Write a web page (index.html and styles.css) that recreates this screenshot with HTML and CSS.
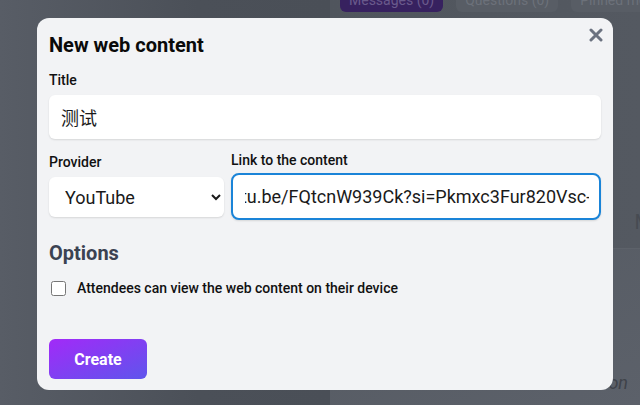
FILE: index.html
```html
<!DOCTYPE html>
<html>
<head>
<meta charset="UTF-8">
<title>New web content</title>
<link rel="stylesheet" href="styles.css">
</head>
<body>

   <div class="page">
      <div class="side"></div>
      <div class="panel">
         <div class="tabs">
            <span class="tab active">Messages (0)</span>
            <span class="tab">Questions (0)</span>
            <span class="tab">Pinned messages</span>
         </div>
         <div class="panel-body">
            <span class="ghost">M</span>
         </div>
         <div class="panel-foot">
            <span class="hint">Join the conversation</span>
         </div>
      </div>
   </div>

   <div class="overlay">
      <div class="modal">
         <button class="close" title="Close">
            <svg width="14" height="14" viewBox="0 0 14 14">
               <path d="M2 2 L12 12 M12 2 L2 12" stroke="#6b7280" stroke-width="3" stroke-linecap="round"/>
            </svg>
         </button>

         <h2 class="heading">New web content</h2>

         <label class="label" for="title">Title</label>
         <input class="field title-field" id="title" type="text" value="测试">

         <div class="row">
            <div class="col provider">
               <label class="label" for="provider">Provider</label>
               <select class="field select" id="provider">
                  <option>YouTube</option>
                  <option>Vimeo</option>
                  <option>Other</option>
               </select>
            </div>
            <div class="col link">
               <label class="label" for="link">Link to the content</label>
               <input class="field link-field" id="link" type="text" value="https://youtu.be/FQtcnW939Ck?si=Pkmxc3Fur820Vsc-">
            </div>
         </div>

         <h3 class="options">Options</h3>
         <label class="check">
            <input type="checkbox">
            <span>Attendees can view the web content on their device</span>
         </label>

         <button class="create">Create</button>
      </div>
   </div>

</body>
</html>
```

FILE: styles.css
```css
html, body {
   margin: 0;
   height: 100%;
}

body {
   font-family: Roboto, "Noto Sans CJK SC", sans-serif;
   overflow: hidden;
   background: #4d525a;
}

/* page behind the dialog */
.page {
   display: flex;
   height: 405px;
}

.side {
   width: 330px;
   flex-shrink: 0;
   background: linear-gradient(to right, #585d66, #4b5058 60%, #4a4f57);
}

.panel {
   flex: 1;
   min-width: 0;
   overflow: hidden;
   display: flex;
   flex-direction: column;
   background: linear-gradient(to right, #50555d, #545961);
}

.tabs {
   display: flex;
   gap: 13px;
   padding-left: 10px;
   margin-top: -12px;
   white-space: nowrap;
}

.tab {
   padding: 4px 9px;
   border-radius: 6px;
   font-size: 14px;
   color: #6c717a;
   background: #585d65;
}

.tab.active {
   background: #37215f;
   color: #6a5a8c;
}

.panel-body {
   height: 236px;
   display: flex;
   align-items: flex-end;
   justify-content: flex-end;
}

.ghost {
   font-size: 20px;
   color: #474b52;
   margin-right: -12px;
   margin-bottom: 14px;
}

.panel-foot {
   flex: 1;
   border-top: 1px solid #5d626a;
   background: linear-gradient(to bottom right, #555a62, #5c616a);
   display: flex;
   align-items: flex-end;
   justify-content: flex-end;
   padding-bottom: 12px;
}

.hint {
   font-style: italic;
   font-size: 18px;
   color: #3f434a;
   margin-right: 12px;
   white-space: nowrap;
}

/* dialog */
.overlay {
   position: absolute;
   top: 0;
   left: 0;
   right: 0;
   bottom: 0;
}

.modal {
   position: absolute;
   left: 37px;
   top: 18px;
   width: 576px;
   height: 372px;
   box-sizing: border-box;
   padding: 15px 12px 11px 12px;
   background: #f2f3f5;
   border-radius: 12px;
   display: flex;
   flex-direction: column;
   align-items: flex-start;
}

.close {
   position: absolute;
   right: 10px;
   top: 10px;
   border: none;
   background: none;
   padding: 0;
   cursor: pointer;
}

.heading {
   margin: 0;
   font-size: 20px;
   line-height: 24px;
   font-weight: 700;
   color: #0a0a0a;
}

.label {
   display: block;
   font-size: 14px;
   line-height: 20px;
   font-weight: 500;
   color: #111;
}

.heading + .label {
   margin-top: 13px;
}

.field {
   box-sizing: border-box;
   border: none;
   background: #fff;
   border-radius: 6px;
   box-shadow: 0 1px 2px rgba(0, 0, 0, 0.12);
   font-family: Roboto, "Noto Sans CJK SC", sans-serif;
   font-size: 18px;
   color: #1a1a1a;
   outline: none;
}

.title-field {
   width: 100%;
   height: 44px;
   margin-top: 5px;
   padding: 0 12px;
}

.row {
   display: flex;
   gap: 7px;
   width: 100%;
   margin-top: 11px;
}

.provider {
   width: 175px;
   padding-top: 2px;
}

.select {
   width: 100%;
   height: 40px;
   margin-top: 5px;
   padding: 0 12px;
}

.link {
   flex: 1;
}

.link-field {
   width: 100%;
   height: 47px;
   margin-top: 3px;
   padding: 0 10px 0 12px;
   border: 2px solid #1a84d8;
   border-radius: 8px;
   text-indent: -91px;
}

.options {
   margin: 21px 0 0 0;
   font-size: 20px;
   line-height: 24px;
   font-weight: 700;
   color: #3b4252;
}

.check {
   display: flex;
   align-items: center;
   gap: 11px;
   margin-top: 13px;
   height: 20px;
   font-size: 14px;
   font-weight: 500;
   color: #111;
}

.check input {
   width: 15px;
   height: 15px;
   margin: 0 0 0 2px;
}

.create {
   margin-top: 41px;
   width: 98px;
   height: 40px;
   border: none;
   border-radius: 6px;
   background: linear-gradient(to bottom right, #a22af8, #5f55ec);
   color: #fff;
   font-family: Roboto, sans-serif;
   font-size: 16px;
   font-weight: 700;
   cursor: pointer;
}
```
